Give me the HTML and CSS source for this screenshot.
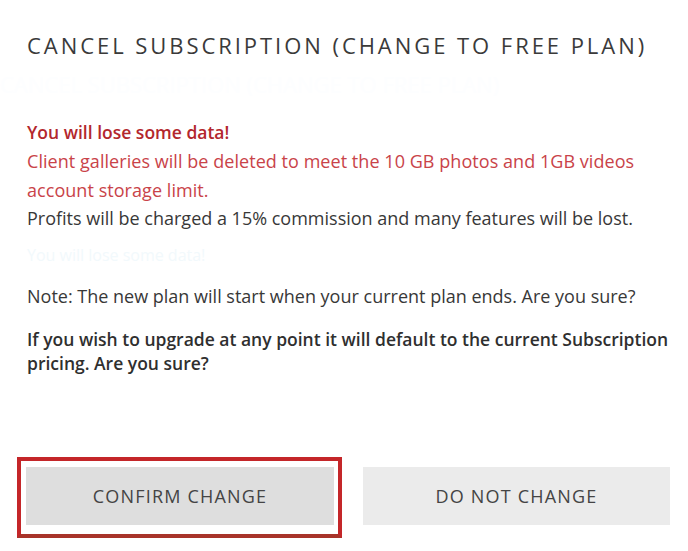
FILE: index.html
```html
<!DOCTYPE html>
<html>
<head>
<meta charset="utf-8">
<link rel="stylesheet" href="styles.css">
</head>
<body>
<div class="modal">
  <h1 class="title">CANCEL SUBSCRIPTION (CHANGE TO FREE PLAN)</h1>
  <div class="ghost-title">CANCEL SUBSCRIPTION (CHANGE TO FREE PLAN)</div>
  <div class="warn">
    <p class="warn-head">You will lose some data!</p>
    <p class="warn-text">Client galleries will be deleted to meet the 10 GB photos and 1GB videos account storage limit.</p>
  </div>
  <p class="plain">Profits will be charged a 15% commission and many features will be lost.</p>
  <p class="ghost">You will lose some data!</p>
  <p class="plain note">Note: The new plan will start when your current plan ends. Are you sure?</p>
  <p class="strong">If you wish to upgrade at any point it will default to the current Subscription pricing. Are you sure?</p>
  <div class="actions">
    <div class="highlight"><button class="btn btn-confirm">CONFIRM CHANGE</button></div>
    <button class="btn btn-cancel">DO NOT CHANGE</button>
  </div>
</div>
</body>
</html>
```
FILE: styles.css
```css
html, body {
  margin: 0;
  padding: 0;
  background: #ffffff;
}
body {
  font-family: "Open Sans", "Liberation Sans", sans-serif;
  color: #333333;
  width: 688px;
  height: 551px;
  overflow: hidden;
}
.modal {
  padding: 30px 10px 0 27px;
}
.title {
  margin: 0;
  font-size: 22px;
  font-weight: 400;
  letter-spacing: 2.95px;
  line-height: 30px;
  color: #3a3a3a;
  white-space: nowrap;
}
.ghost-title {
  height: 58px;
  color: #fdfeff;
  font-size: 22px;
  line-height: 20px;
  overflow: hidden;
  margin-left: -27px;
  white-space: nowrap;
  padding-top: 14px;
  box-sizing: border-box;
}
.warn p {
  margin: 0;
}
.warn-head {
  font-size: 17.5px;
  font-weight: 600;
  line-height: 29px;
  color: #b3272d;
}
.warn-text {
  font-size: 18px;
  line-height: 29px;
  color: #c94349;
  padding-right: 4px;
  letter-spacing: 0.05px;
}
.plain {
  margin: 0;
  font-size: 18px;
  line-height: 27px;
  color: #383838;
}
.ghost {
  margin: 0;
  height: 52px;
  padding-top: 16px;
  box-sizing: border-box;
  font-size: 16px;
  line-height: 14px;
  color: #f2f9fc;
}
.note {
  line-height: 24px;
}
.strong {
  margin: 19px 0 0;
  font-size: 17.5px;
  font-weight: 600;
  line-height: 24px;
  color: #2f2f2f;
}
.actions {
  display: flex;
  align-items: flex-start;
  margin-top: 92px;
  margin-left: -10px;
  gap: 21px;
}
.highlight {
  border: 4px solid #c42629;
  border-bottom-color: #a8342a;
  padding: 6px 4px 9px 5px;
  margin-top: -10px;
}
.btn {
  font-family: "Open Sans", "Liberation Sans", sans-serif;
  font-size: 18px;
  letter-spacing: 1.2px;
  color: #444444;
  border: none;
  height: 58px;
  padding: 0;
  display: block;
}
.btn-confirm {
  width: 308px;
  background: #dedede;
}
.btn-cancel {
  width: 307px;
  background: #ebebeb;
}
```
